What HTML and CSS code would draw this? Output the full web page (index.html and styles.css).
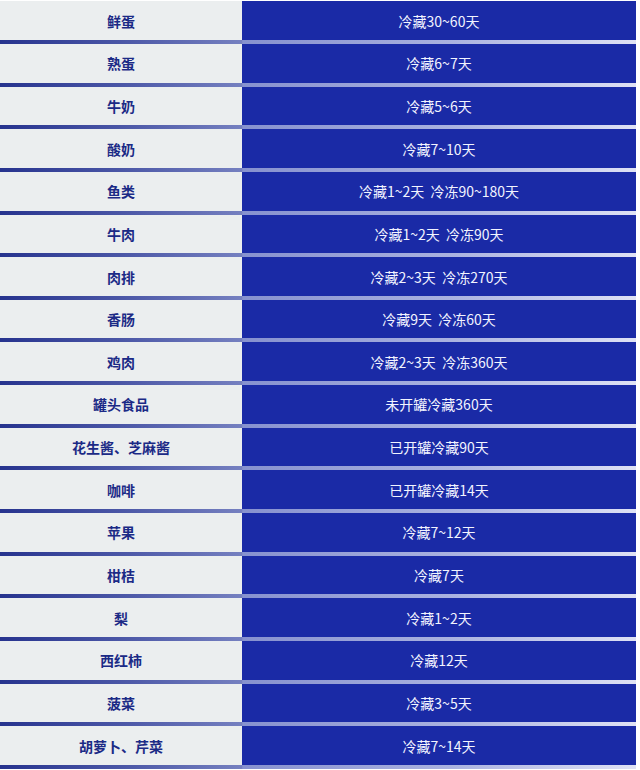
FILE: index.html
```html
<!DOCTYPE html>
<html lang="zh">
<head>
<meta charset="utf-8">
<link rel="stylesheet" href="styles.css">
</head>
<body>
<div class="table">
  <div class="row"><div class="name">鲜蛋</div><div class="val">冷藏30~60天</div></div>
  <div class="row"><div class="name">熟蛋</div><div class="val">冷藏6~7天</div></div>
  <div class="row"><div class="name">牛奶</div><div class="val">冷藏5~6天</div></div>
  <div class="row"><div class="name">酸奶</div><div class="val">冷藏7~10天</div></div>
  <div class="row"><div class="name">鱼类</div><div class="val">冷藏1~2天&nbsp;&nbsp;冷冻90~180天</div></div>
  <div class="row"><div class="name">牛肉</div><div class="val">冷藏1~2天&nbsp;&nbsp;冷冻90天</div></div>
  <div class="row"><div class="name">肉排</div><div class="val">冷藏2~3天&nbsp;&nbsp;冷冻270天</div></div>
  <div class="row"><div class="name">香肠</div><div class="val">冷藏9天&nbsp;&nbsp;冷冻60天</div></div>
  <div class="row"><div class="name">鸡肉</div><div class="val">冷藏2~3天&nbsp;&nbsp;冷冻360天</div></div>
  <div class="row"><div class="name">罐头食品</div><div class="val">未开罐冷藏360天</div></div>
  <div class="row"><div class="name">花生酱、芝麻酱</div><div class="val">已开罐冷藏90天</div></div>
  <div class="row"><div class="name">咖啡</div><div class="val">已开罐冷藏14天</div></div>
  <div class="row"><div class="name">苹果</div><div class="val">冷藏7~12天</div></div>
  <div class="row"><div class="name">柑桔</div><div class="val">冷藏7天</div></div>
  <div class="row"><div class="name">梨</div><div class="val">冷藏1~2天</div></div>
  <div class="row"><div class="name">西红柿</div><div class="val">冷藏12天</div></div>
  <div class="row"><div class="name">菠菜</div><div class="val">冷藏3~5天</div></div>
  <div class="row"><div class="name">胡萝卜、芹菜</div><div class="val">冷藏7~14天</div></div>
</div>
</body>
</html>
```

FILE: styles.css
```css
html, body {
  margin: 0;
  padding: 0;
  background: #ffffff;
}
body {
  font-family: "Noto Sans CJK SC", "Liberation Sans", sans-serif;
  padding-top: 1.35px;
}
.table {
  width: 636px;
  display: flex;
  flex-direction: column;
}
.row {
  display: grid;
  grid-template-columns: 242px 394px;
  height: 38.65px;
  border-bottom: 4px solid transparent;
  border-image: linear-gradient(to right, #26338e 0, #4a56a6 120px, #7580c0 242px, #8691cf 243px, #aab2e0 450px, #dfe2f5 636px) 1;
}
.name {
  background: #ebeeef;
  color: #1b2a86;
  font-weight: 700;
  font-size: 14px;
  display: flex;
  align-items: center;
  justify-content: center;
}
.val {
  background: #1a2aa6;
  color: #f2f4ff;
  font-size: 14px;
  display: flex;
  align-items: center;
  justify-content: center;
  white-space: pre;
}
```
